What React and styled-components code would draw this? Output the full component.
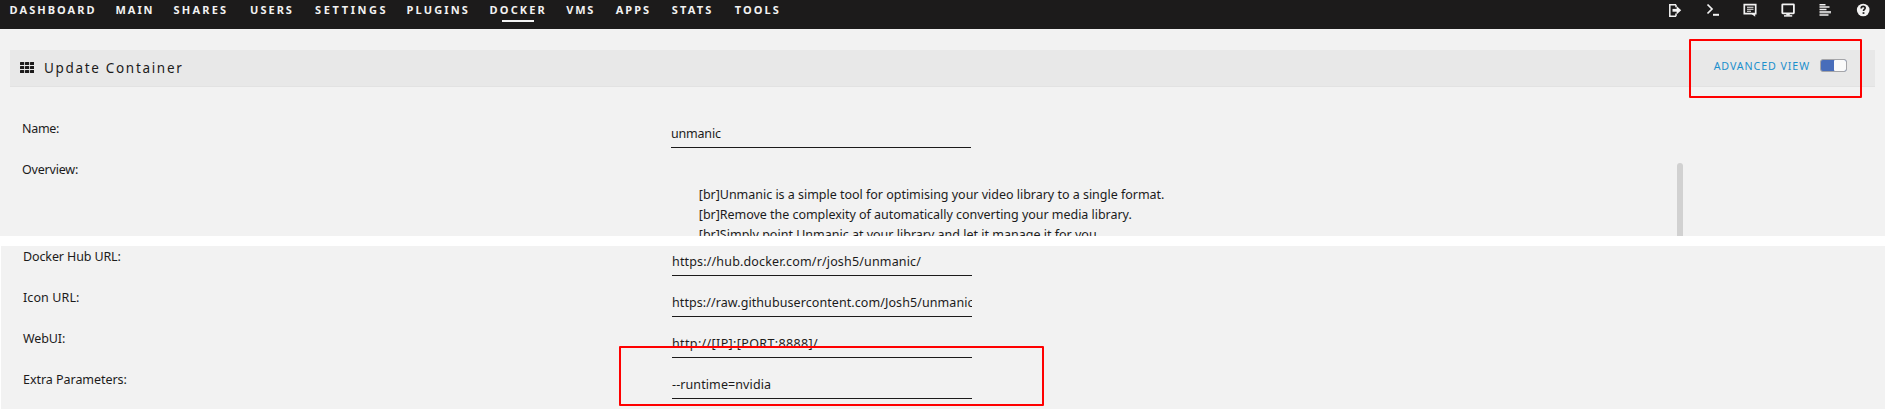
import React from "react";
import styled, { createGlobalStyle } from "styled-components";

const GlobalStyle = createGlobalStyle`
  * { box-sizing: border-box; }
  body { margin: 0; background: #fff; overflow: hidden; }
`;

const Page = styled.div`
  position: relative;
  display: flex;
  flex-direction: column;
  gap: 10px;
  width: 1885px;
  height: 409px;
  overflow: hidden;
  font: 12.5px/20px "Noto Sans", "Open Sans", sans-serif;
  color: #1c1b1b;
`;

const Panel = styled.section`
  height: ${(p) => p.$height}px;
  margin-left: ${(p) => p.$inset || 0}px;
  flex: none;
  overflow: hidden;
  background: #f2f2f2;
`;

const TopBar = styled.header`
  display: flex;
  justify-content: space-between;
  height: 29px;
  background: #1c1b1b;
  color: #f2f2f2;
`;

const Nav = styled.nav`
  display: flex;
  padding-left: 9.6px;
`;

const NavItem = styled.a`
  position: relative;
  flex: none;
  width: ${(p) => p.$width}px;
  font-size: 11px;
  font-weight: 700;
  letter-spacing: ${(p) => p.$track}px;
  white-space: nowrap;
`;

const ActiveMark = styled.span`
  position: absolute;
  left: 12.4px;
  top: 20px;
  width: 32px;
  height: 2px;
  background: #f2f2f2;
`;

const Tools = styled.div`
  display: flex;
  gap: 21.6px;
  padding: 2px 14px 0 0;
  svg { width: 16px; height: 16px; display: block; }
`;

const TitleBar = styled.div`
  display: flex;
  justify-content: space-between;
  align-items: flex-start;
  height: 37px;
  margin: 21px 10px 0;
  padding: 0 28px 0 10px;
  background: #e8e8e8;
  border-bottom: 1px solid #e2e2e2;
`;

const Title = styled.h1`
  display: flex;
  gap: 10px;
  margin: 0;
  padding-top: 8px;
  font-size: 13.5px;
  font-weight: 400;
  letter-spacing: 1.68px;
  svg { width: 14px; height: 11px; margin-top: 4px; }
`;

const ViewSwitch = styled.div`
  display: flex;
  gap: 10px;
  padding-top: 6px;
  color: #1b8fcc;
  font-size: 10.7px;
  letter-spacing: 0.9px;
`;

const Toggle = styled.span`
  display: flex;
  justify-content: flex-end;
  width: 27px;
  height: 13px;
  margin-top: 3px;
  border: 1px solid #a5a5a8;
  border-radius: 3px;
  background: #486dba;
  overflow: hidden;
`;

const Thumb = styled.span`
  width: 12px;
  background: #fafafa;
  border-radius: 1px;
`;

const Form = styled.div`
  padding: ${(p) => p.$top}px 0 0 22px;
`;

const Row = styled.div`
  display: grid;
  grid-template-columns: 649px 1fr;
  height: 41px;
`;

const Label = styled.span`
  padding-top: 1px;
  letter-spacing: ${(p) => p.$track}px;
`;

const Value = styled.span`
  width: 300px;
  height: 25px;
  margin-top: 5px;
  padding-top: 1px;
  border-bottom: 1px solid #1c1b1b;
  letter-spacing: ${(p) => p.$track}px;
  white-space: nowrap;
  overflow: hidden;
`;

const Overview = styled.div`
  display: flex;
  justify-content: space-between;
  height: 90px;
  padding: 4px 202px 0 27.8px;
`;

const Lines = styled.div`
  padding-top: 22px;
`;

const Line = styled.div`
  white-space: nowrap;
  letter-spacing: ${(p) => p.$track}px;
`;

const ScrollThumb = styled.div`
  width: 6px;
  background: #d1d1d1;
  border-radius: 3px;
`;

const Highlight = styled.div`
  position: absolute;
  left: ${(p) => p.$x}px;
  top: ${(p) => p.$y}px;
  width: ${(p) => p.$w}px;
  height: ${(p) => p.$h}px;
  border: 2px solid #ff0000;
  border-radius: 1px;
`;

const nav = [
  ["DASHBOARD", 106, 2.05],
  ["MAIN", 58, 1.9],
  ["SHARES", 76.5, 2.2],
  ["USERS", 65, 2],
  ["SETTINGS", 91.5, 2.6],
  ["PLUGINS", 83, 2.15],
  ["DOCKER", 76.6, 2.15],
  ["VMS", 49.5, 1.8],
  ["APPS", 56, 2],
  ["STATS", 63, 2.2],
  ["TOOLS", 60, 2.1],
];

const overview = [
  ["[br]Unmanic is a simple tool for optimising your video library to a single format.", -0.02],
  ["[br]Remove the complexity of automatically converting your media library.", -0.03],
  ["[br]Simply point Unmanic at your library and let it manage it for you.", 0],
];

const fields = [
  ["Docker Hub URL:", -0.12, "https://hub.docker.com/r/josh5/unmanic/", 0.16],
  ["Icon URL:", 0.1, "https://raw.githubusercontent.com/Josh5/unmanic", 0.08],
  ["WebUI:", -0.1, "http://[IP]:[PORT:8888]/", 0.36],
  ["Extra Parameters:", -0.04, "--runtime=nvidia", 0.1],
];

const GridIcon = () => (
  <svg viewBox="0 0 14 11" fill="#1c1b1b">
    {[0, 5, 10].map((x) =>
      [0, 4, 8].map((y) => <rect key={`${x}-${y}`} x={x} y={y} width="4.2" height="3.1" rx="0.5" />)
    )}
  </svg>
);

const LogoutIcon = () => (
  <svg viewBox="0 0 16 16" fill="none" stroke="#f2f2f2">
    <path d="M9 2.7H2.8v11.6H9M9 2.7v2.5M9 11.5v2.8" strokeWidth="1.5" />
    <path d="M5.5 8.3H10" strokeWidth="2.8" />
    <path d="M9.6 4 14.2 8.3 9.6 12.6Z" fill="#f2f2f2" stroke="none" />
  </svg>
);

const TerminalIcon = () => (
  <svg viewBox="0 0 16 16" fill="none" stroke="#f2f2f2">
    <path d="M2.5 2.5 7 7 2.5 11.5" strokeWidth="1.7" />
    <path d="M8 12.8h6" strokeWidth="2" />
  </svg>
);

const FeedbackIcon = () => (
  <svg viewBox="0 0 16 16" fill="none" stroke="#f2f2f2">
    <path d="M2.3 2.7h11.4v9H2.3Z" strokeWidth="1.7" />
    <path d="M5 5.3h6.5M5 7.3h6.5M5 9.3h4" strokeWidth="1.1" />
    <path d="M8.8 11.5h4.4v3.2Z" fill="#f2f2f2" stroke="none" />
  </svg>
);

const MonitorIcon = () => (
  <svg viewBox="0 0 16 16" fill="none" stroke="#f2f2f2">
    <rect x="2.3" y="2.3" width="11.6" height="9" rx="0.5" strokeWidth="1.8" />
    <path d="M8 11.5v2" strokeWidth="3.5" />
    <path d="M4 13.9h8.2" strokeWidth="1.5" />
  </svg>
);

const LogIcon = () => (
  <svg viewBox="0 0 16 16" fill="none" stroke="#f2f2f2" strokeWidth="1.5">
    <path d="M2.5 2.8h6M2.5 5.1h10M2.5 7.4h7M2.5 12.9h9" />
    <path d="M2.5 10.2h11.5" stroke="#c4c4c4" strokeWidth="2.4" />
  </svg>
);

const HelpIcon = () => (
  <svg viewBox="0 0 16 16" fill="none">
    <circle cx="8.2" cy="8" r="6.3" fill="#f2f2f2" />
    <path d="M6.2 6.4c0-1.5 1-2 2-2 1.2 0 2 .7 2 1.7 0 1.3-1.7 1.4-1.7 3" stroke="#1c1b1b" strokeWidth="1.6" />
    <rect x="7.6" y="10.2" width="1.8" height="1.7" fill="#1c1b1b" />
  </svg>
);

export default function App() {
  return (
    <Page>
      <GlobalStyle />
      <Panel $height={236}>
        <TopBar>
          <Nav>
            {nav.map(([name, width, track]) => (
              <NavItem key={name} $width={width} $track={track}>
                {name}
                {name === "DOCKER" && <ActiveMark />}
              </NavItem>
            ))}
          </Nav>
          <Tools>
            <LogoutIcon />
            <TerminalIcon />
            <FeedbackIcon />
            <MonitorIcon />
            <LogIcon />
            <HelpIcon />
          </Tools>
        </TopBar>
        <TitleBar>
          <Title>
            <GridIcon />
            Update Container
          </Title>
          <ViewSwitch>
            ADVANCED VIEW
            <Toggle>
              <Thumb />
            </Toggle>
          </ViewSwitch>
        </TitleBar>
        <Form $top={31}>
          <Row>
            <Label $track={-0.3}>Name:</Label>
            <Value $track={-0.2}>unmanic</Value>
          </Row>
          <Row>
            <Label $track={-0.2}>Overview:</Label>
            <Overview>
              <Lines>
                {overview.map(([text, track]) => (
                  <Line key={text} $track={track}>{text}</Line>
                ))}
              </Lines>
              <ScrollThumb />
            </Overview>
          </Row>
        </Form>
      </Panel>
      <Panel $height={163} $inset={1}>
        <Form $top={0}>
          {fields.map(([label, labelTrack, value, valueTrack]) => (
            <Row key={label}>
              <Label $track={labelTrack}>{label}</Label>
              <Value $track={valueTrack}>{value}</Value>
            </Row>
          ))}
        </Form>
      </Panel>
      <Highlight $x={1689} $y={39} $w={173} $h={59} />
      <Highlight $x={619} $y={346} $w={425} $h={60} />
    </Page>
  );
}
